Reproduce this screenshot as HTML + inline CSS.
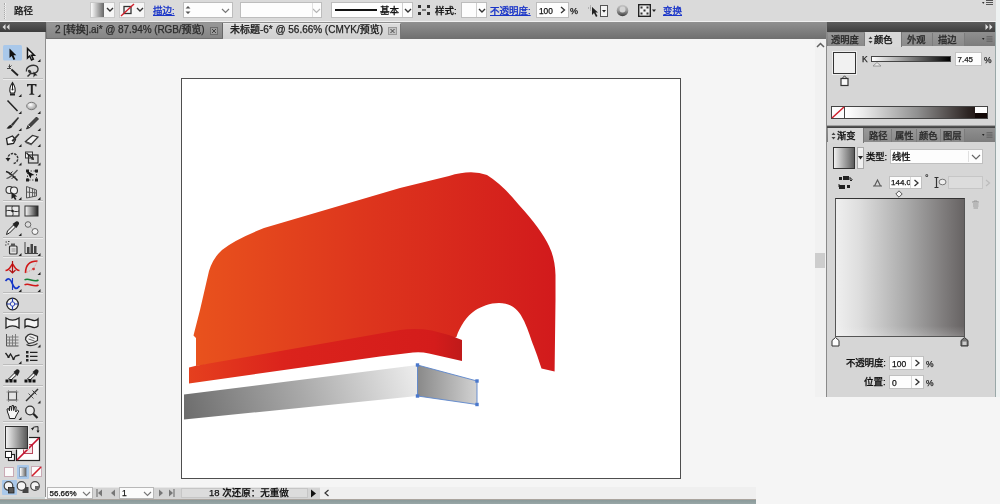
<!DOCTYPE html>
<html lang="zh">
<head>
<meta charset="utf-8">
<title>Illustrator</title>
<style>
*{box-sizing:border-box;margin:0;padding:0}
html,body{width:1000px;height:504px;overflow:hidden;background:#f5f5f5}
body{position:relative;font-family:"Liberation Sans","Noto Sans CJK SC",sans-serif;font-size:10px;color:#111;font-weight:500;filter:blur(.4px)}
.a{position:absolute}
.t{position:absolute;white-space:nowrap;line-height:12px;font-size:9.5px;-webkit-text-stroke:.25px}
.bl{color:#1a35c8;text-decoration:underline}
.wb{position:absolute;background:#fdfdfd;border:1px solid #bdbdbd}
.sep{position:absolute;left:3px;width:40px;height:1px;background:#bcbcbc;border-bottom:1px solid #ececec;height:2px}
svg{position:absolute;overflow:visible}
</style>
</head>
<body>
<!-- ===== canvas ===== -->
<div class="a" id="canvas" style="left:47px;top:39px;width:779px;height:448px;background:#f5f5f5"></div>
<div class="a" id="artboard" style="left:181px;top:77.5px;width:500px;height:401px;background:#fff;border:1.5px solid #4e4e4e"></div>
<svg id="art" style="left:0;top:0" width="1000" height="504" viewBox="0 0 1000 504">
<defs>
<linearGradient id="gBody" x1="190" y1="0" x2="556" y2="0" gradientUnits="userSpaceOnUse"><stop offset="0" stop-color="#e9531d"/><stop offset=".45" stop-color="#de371d"/><stop offset="1" stop-color="#d21a1c"/></linearGradient>
<linearGradient id="gStrip" x1="188" y1="0" x2="462" y2="0" gradientUnits="userSpaceOnUse"><stop offset="0" stop-color="#e5401e"/><stop offset=".35" stop-color="#db231c"/><stop offset=".9" stop-color="#d41c1b"/><stop offset="1" stop-color="#c01a1a"/></linearGradient>
<linearGradient id="gBar" x1="190" y1="425" x2="410" y2="352" gradientUnits="userSpaceOnUse"><stop offset="0" stop-color="#6e6e6e"/><stop offset=".5" stop-color="#a9a9a9"/><stop offset="1" stop-color="#ececec"/></linearGradient>
<linearGradient id="gSel" x1="418" y1="0" x2="477" y2="0" gradientUnits="userSpaceOnUse"><stop offset="0" stop-color="#8a8a8a"/><stop offset="1" stop-color="#d2d2d2"/></linearGradient>
</defs>
<path fill="url(#gBody)" d="M196,366 L196,338 L193.500,335.500 L194.500,331.500 L200,310 L203,297 L209,271 Q213,258 222,250 Q234,240 264,228 L400,188 L449,176 Q471,169 487,175 Q503,185 519,205 Q541,229 549,246 Q555,258 555.5,275 L555.5,300 L554.600,371.600 L541.500,368.400 C537.500,356 534,347 531.700,341 C529,333 526,323.500 520.800,315 C515,306 507,303 499,303 C490,303 481,306.500 475,310.600 C467,316 460,326 456.400,337 L440,345 L400,336 L300,353 Z"/>
<path fill="url(#gStrip)" d="M189,367.500 L196,365.800 L400,330 Q416,327.800 432,330.500 Q448,334 462,340 L462,361 L429,353.5 Q421,351.8 413,352.6 L380,356.5 L189,383.500 Z"/>
<path fill="url(#gBar)" d="M184,394.5 L417.5,365 L417.5,396 L184,419.5 Z"/>
<path fill="url(#gSel)" stroke="#5a84cc" stroke-width=".9" d="M417.5,365 L477,381 L477,404.5 L417.5,396 Z"/>
<g fill="#4a78cc"><rect x="415.800" y="363.300" width="3.400" height="3.400"/><rect x="475.300" y="379.300" width="3.400" height="3.400"/><rect x="475.300" y="402.800" width="3.400" height="3.400"/><rect x="415.800" y="394.300" width="3.400" height="3.400"/></g>
</svg>
<!-- ===== control bar ===== -->
<div class="a" id="ctrl" style="left:0;top:0;width:1000px;height:22px;background:#dadada;border-bottom:1px solid #f0f0f0"></div>
<div id="ctrlitems">
<div class="a" style="left:4px;top:3px;width:2px;height:16px;border-left:1px dotted #aaa;border-right:1px dotted #f4f4f4"></div>
<div class="t" style="left:14px;top:5px;font-size:9.5px;color:#1a1a1a">路径</div>
<div class="wb" style="left:90px;top:2px;width:25px;height:16px;border-color:#c9c9c9;background:#f6f6f6"></div>
<div class="a" style="left:92px;top:3px;width:12px;height:14px;background:linear-gradient(90deg,#f4f4f4,#666)"></div>
<svg style="left:106px;top:7px" width="8" height="6"><path d="M1,1 L4,4 L7,1" fill="none" stroke="#333" stroke-width="1.4"/></svg>
<div class="wb" style="left:119px;top:2px;width:26px;height:16px;border-color:#c9c9c9;background:#f6f6f6"></div>
<svg style="left:120px;top:3px" width="15" height="14"><rect x="4" y="3.5" width="7" height="7" fill="none" stroke="#333" stroke-width="1.3"/><path d="M1,13 L14,1" stroke="#d0202c" stroke-width="1.4"/></svg>
<svg style="left:136px;top:7px" width="8" height="6"><path d="M1,1 L4,4 L7,1" fill="none" stroke="#333" stroke-width="1.4"/></svg>
<div class="t bl" style="left:153px;top:5px">描边:</div>
<div class="wb" style="left:183px;top:2px;width:50px;height:16px"></div>
<svg style="left:185px;top:5px" width="6" height="10"><path d="M0.5,3.5 L3,1 L5.5,3.5 Z M0.5,6.5 L3,9 L5.5,6.5 Z" fill="#555"/></svg>
<svg style="left:221px;top:8px" width="9" height="6"><path d="M1,1 L4.5,4.5 L8,1" fill="none" stroke="#777" stroke-width="1.2"/></svg>
<div class="wb" style="left:240px;top:2px;width:82px;height:16px"></div>
<svg style="left:312px;top:8px" width="9" height="6"><path d="M1,1 L4.5,4.5 L8,1" fill="none" stroke="#b5b5b5" stroke-width="1.2"/></svg>
<div class="a" style="left:312px;top:3px;width:1px;height:14px;background:#e0e0e0"></div>
<div class="wb" style="left:331px;top:2px;width:82px;height:16px"></div>
<div class="a" style="left:335px;top:9px;width:42px;height:2px;background:#111"></div>
<div class="t" style="left:380px;top:5px;font-size:9.5px">基本</div>
<div class="a" style="left:402px;top:3px;width:1px;height:14px;background:#d0d0d0"></div>
<svg style="left:404px;top:8px" width="8" height="6"><path d="M1,1 L4,4 L7,1" fill="none" stroke="#333" stroke-width="1.4"/></svg>
<svg style="left:418px;top:4px" width="12" height="12"><g fill="#333"><rect x="0" y="1" width="3" height="3"/><rect x="9" y="1" width="3" height="3"/><rect x="0" y="8" width="3" height="3"/><rect x="9" y="8" width="3" height="3"/><rect x="4" y="5" width="4" height="2" fill="#777"/></g></svg>
<div class="t" style="left:435px;top:5px">样式:</div>
<div class="wb" style="left:461px;top:2px;width:26px;height:16px"></div>
<div class="a" style="left:476px;top:3px;width:1px;height:14px;background:#d0d0d0"></div>
<svg style="left:478px;top:8px" width="8" height="6"><path d="M1,1 L4,4 L7,1" fill="none" stroke="#333" stroke-width="1.4"/></svg>
<div class="t bl" style="left:490px;top:5px">不透明度:</div>
<div class="wb" style="left:536px;top:2px;width:33px;height:16px"></div>
<div class="t" style="left:539px;top:5px;font-size:8.3px">100</div>
<svg style="left:560px;top:6px" width="6" height="8"><path d="M1,1 L4.5,4 L1,7" fill="none" stroke="#333" stroke-width="1.3"/></svg>
<div class="t" style="left:570px;top:5px;font-size:9px">%</div>
<svg style="left:586px;top:3px" width="24" height="15"><g fill="none" stroke="#888" stroke-width="1"><path d="M2,5 h5 M4.500,2.500 v5" stroke-dasharray="1 1"/></g><path d="M6,4 L6,12 L8,10 L10,14 L11.500,13 L9.500,9.500 L12,9.500 Z" fill="#222"/><rect x="14.500" y="2.500" width="7" height="11" fill="#f4f4f4" stroke="#555"/><path d="M16,7 h4 l-2,2.500 z" fill="#222"/></svg>
<svg style="left:616px;top:4px" width="13" height="13"><defs><linearGradient id="rg" x1="0" y1="0" x2="0" y2="1"><stop offset="0" stop-color="#c8c8c8"/><stop offset=".5" stop-color="#9a9a9a"/><stop offset="1" stop-color="#3a3a3a"/></linearGradient></defs><circle cx="6.500" cy="6.500" r="5.800" fill="url(#rg)"/><circle cx="6.500" cy="5.500" r="3" fill="#d4d4d4"/></svg>
<svg style="left:638px;top:4px" width="20" height="13"><rect x="0.700" y="0.700" width="11.600" height="11.600" fill="#eee" stroke="#222" stroke-width="1.400"/><g fill="#333"><rect x="2.500" y="2.500" width="2" height="2"/><rect x="8.500" y="2.500" width="2" height="2"/><rect x="5.500" y="5.500" width="2" height="2"/><rect x="2.500" y="8.500" width="2" height="2"/><rect x="8.500" y="8.500" width="2" height="2"/></g><path d="M14,5.500 h4 l-2,2.500 z" fill="#222"/></svg>
<div class="t bl" style="left:663px;top:5px">变换</div>
<svg style="left:982px;top:0px" width="12" height="7"><path d="M0,2 h2.500 l-1.250,2z" fill="#333"/><path d="M4,0.500 h7 M4,2.500 h7 M4,4.500 h7" stroke="#555" stroke-width="1"/></svg>
</div>
<!-- ===== tab bar ===== -->
<div class="a" id="tabbar" style="left:46px;top:22px;width:781px;height:17px;background:linear-gradient(#909090,#6f6f6f)"></div>
<div id="tabs">
<div class="a" style="left:47px;top:23px;width:176px;height:15px;background:linear-gradient(#989898,#858585);border-right:1px solid #666"></div>
<div class="t" id="tab1" style="left:55px;top:24px;font-size:10px;color:#2c2c2c;letter-spacing:-0.08px">2 [转换].ai* @ 87.94% (RGB/预览)</div>
<svg style="left:210px;top:27px" width="8" height="8"><rect x=".5" y=".5" width="7" height="7" fill="#9c9c9c" stroke="#6c6c6c"/><path d="M2,2 L6,6 M6,2 L2,6" stroke="#444" stroke-width="1"/></svg>
<div class="a" style="left:223px;top:23px;width:178px;height:16px;background:linear-gradient(#dcdcdc,#d0d0d0);border-right:1px solid #777;border-top:1px solid #e8e8e8"></div>
<div class="t" id="tab2" style="left:230px;top:24px;font-size:10px;color:#222;letter-spacing:-0.02px">未标题-6* @ 56.66% (CMYK/预览)</div>
<svg style="left:388px;top:27px" width="9" height="8"><rect x=".5" y=".5" width="8" height="7" fill="#c4c4c4" stroke="#999"/><path d="M2.500,2 L6.500,6 M6.500,2 L2.500,6" stroke="#444" stroke-width="1"/></svg>
</div>
<!-- ===== toolbar ===== -->
<div class="a" id="tools" style="left:0;top:22px;width:46px;height:475px;background:#d8d8d8;border-right:1.5px solid #8e8e8e"></div>
<div class="a" style="left:0;top:22px;width:46px;height:10px;background:linear-gradient(#5a5a5a,#3c3c3c)"></div>
<!--TOOLS-S--><div id="toolsitems"><svg style="left:2px;top:24px" width="8" height="6"><path d="M3.500,0 L0.500,3 L3.500,6z M7.500,0 L4.500,3 L7.500,6z" fill="#d8d8d8"/></svg><div class="sep" style="top:78px"></div><div class="sep" style="top:200px"></div><div class="sep" style="top:237px"></div><div class="sep" style="top:256px"></div><div class="sep" style="top:292px"></div><div class="sep" style="top:312px"></div><div class="sep" style="top:364px"></div><div class="sep" style="top:385px"></div><div class="sep" style="top:421px"></div><svg id="toolicons" style="left:0;top:0" width="47" height="504" viewBox="0 0 47 504"><defs><radialGradient id="tgE" cx=".4" cy=".35" r=".7"><stop offset="0" stop-color="#fff"/><stop offset="1" stop-color="#999"/></radialGradient><linearGradient id="tgG"><stop offset="0" stop-color="#fff"/><stop offset="1" stop-color="#222"/></linearGradient></defs><rect x="3" y="45" width="19" height="15.500" rx="1.500" fill="#a9c8ea"/><g transform="translate(12.5,54)"><path d="M-3,-5.500 L-3,4 L-0.800,2 L1,6 L2.800,5.200 L1,1.300 L3.800,1.300 Z" fill="#111"/></g><g transform="translate(31.5,54)"><path d="M-4,-5.500 L-4,4 L-1.800,2 L0,6 L1.800,5.200 L0,1.300 L2.800,1.300 Z" fill="#f4f4f4" stroke="#111" stroke-width="1.500"/></g><path d="M40.5,59 l0,3 l-3,0z" fill="#222"/><g transform="translate(12.5,70.5)"><path d="M-1,-1 L5.500,5" stroke="#222" stroke-width="1.800"/><path d="M-4,-4 L-1,-1 M-5.500,-2 h3 M-3,-6 v3 M-1,-5 l-1.500,1.500" stroke="#444" stroke-width="1"/></g><g transform="translate(31.5,70.5)"><path d="M-5,1 C-7,-5 6,-8 6.500,-2 C7,3 0,4 -2,2 C-4,0 -2,-1 -1,1 C0,3 -3,5 -4,6" fill="none" stroke="#333" stroke-width="1.400"/><path d="M2,1 L6,5 L3.500,5 L2,7z" fill="#222"/></g><g transform="translate(12.5,89)"><path d="M0,-6.500 C3,-2 3.500,1 2,4 L-2,4 C-3.500,1 -3,-2 0,-6.500Z" fill="#fff" stroke="#222" stroke-width="1.200"/><path d="M0,-6 V0" stroke="#222" stroke-width="1"/><circle cx="0" cy="0.500" r="1" fill="#222"/><rect x="-2.500" y="4.500" width="5" height="2" fill="#222"/></g><path d="M21.5,94 l0,3 l-3,0z" fill="#222"/><g transform="translate(31.5,89.5)"><path d="M-4.500,-5.500 h9.500 v2.500 h-1 l-0.500,-1.300 h-2.200 v8.300 l1.500,0.500 v0.800 h-5 v-0.800 l1.500,-0.500 v-8.300 h-2.200 l-0.500,1.300 h-1z" fill="#222"/></g><path d="M40.5,94 l0,3 l-3,0z" fill="#222"/><g transform="translate(12.5,106)"><path d="M-5,-5.500 L5,5" stroke="#222" stroke-width="1.500"/></g><path d="M21.5,111 l0,3 l-3,0z" fill="#222"/><g transform="translate(31.5,106)"><ellipse cx="0" cy="0" rx="4.800" ry="3.700" fill="url(#tgE)" stroke="#777" stroke-width="1"/></g><path d="M40.5,111 l0,3 l-3,0z" fill="#222"/><g transform="translate(12.5,123)"><path d="M5.500,-6 L-1.500,1.500 L0.300,3 L6.500,-5z" fill="#333"/><path d="M-1.800,1.800 C-3,2 -4.500,4 -6,5.500 C-3,6 -0.500,5 0,3.300z" fill="#222"/></g><path d="M21.5,128 l0,3 l-3,0z" fill="#222"/><g transform="translate(31.5,123)"><path d="M5,-6 L-3.500,2.500 L-5,6 L-1.500,4.500 L7,-4z" fill="#444" stroke="#222" stroke-width=".8"/><path d="M-3,2.500 l1.500,1.500" stroke="#eee" stroke-width="1"/></g><path d="M40.5,128 l0,3 l-3,0z" fill="#222"/><g transform="translate(12.5,139.5)"><path d="M-6,-1 L0,-3.500 L3,0 L1,4 L-5,5z" fill="#f4f4f4" stroke="#222" stroke-width="1.300"/><path d="M6,-6 L-1,1 L0.500,2.500 L7,-5z" fill="#333"/></g><path d="M21.5,144 l0,3 l-3,0z" fill="#222"/><g transform="translate(31.5,139.5)"><path d="M-6,2 L1,-4 L6.500,-2.500 L0,4.500z" fill="#f2f2f2" stroke="#333" stroke-width="1.200"/><path d="M-6,2 L0,4.500 L0,6 L-6,3.500z" fill="#555"/></g><path d="M40.5,144 l0,3 l-3,0z" fill="#222"/><g transform="translate(12.5,158)"><path d="M-4.500,2 A5,5 0 1 1 1,5.500" fill="none" stroke="#333" stroke-width="1.400" stroke-dasharray="2.500 1"/><path d="M-7,0 h5 l-2.500,3.500z" fill="#222"/></g><path d="M21.5,162.5 l0,3 l-3,0z" fill="#222"/><g transform="translate(31.5,157.5)"><rect x="-6" y="-5.500" width="7" height="6" fill="#eee" stroke="#333" stroke-width="1"/><rect x="-3" y="-2.500" width="9.500" height="8" fill="none" stroke="#333" stroke-width="1.200"/><path d="M-5,-4.500 L1,1" stroke="#222" stroke-width="1.200"/><path d="M2.500,2.500 l-3,-0.500 l2.500,-2.500z" fill="#222"/></g><path d="M40.5,162.5 l0,3 l-3,0z" fill="#222"/><g transform="translate(12.5,175.5)"><path d="M-6.500,-4 C-2,-3 0,0 5,5" fill="none" stroke="#222" stroke-width="1.600"/><path d="M-6,3 C-2,2 1,-1 5,-5.500" fill="none" stroke="#555" stroke-width="1.200"/><path d="M-3,-1 l3,-3 M-1,3 l4,-2" stroke="#333" stroke-width="1"/></g><g transform="translate(31.5,175.5)"><rect x="-4" y="-4.500" width="9" height="9" fill="none" stroke="#444" stroke-width="1" stroke-dasharray="1.500 1.500"/><g fill="#222"><rect x="-5.500" y="-6" width="3" height="3"/><rect x="3.500" y="-6" width="3" height="3"/><rect x="-5.500" y="3" width="3" height="3"/><rect x="3.500" y="3" width="3" height="3"/></g><path d="M-5,-5 L-1,3 L0,0 L3,-0.500z" fill="#111"/></g><g transform="translate(12.5,192)"><circle cx="-3" cy="-2" r="3.500" fill="#eee" stroke="#333" stroke-width="1.100"/><circle cx="1.500" cy="-1.500" r="3.500" fill="#eee" stroke="#333" stroke-width="1.100"/><path d="M-1,0 L-1,7 L1,5.500 L2.500,8 L4,7.300 L2.500,4.800 L4.800,4.500z" fill="#222"/></g><path d="M21.5,197 l0,3 l-3,0z" fill="#222"/><g transform="translate(31.5,192)"><path d="M-5,-5.500 L-5,6 L5,4 L5,-2z" fill="#ddd" stroke="#555" stroke-width="1"/><path d="M-2,-4.500 V5.500 M1,-3.500 V5 M3.200,-2.700 V4.500 M-5,0 L5,1" stroke="#555" stroke-width=".9"/></g><path d="M40.5,197 l0,3 l-3,0z" fill="#222"/><g transform="translate(12.5,211)"><rect x="-6.500" y="-5" width="13" height="10" fill="#e8e8e8" stroke="#333" stroke-width="1.200"/><path d="M-6.500,0 C-3,-2 3,2 6.500,0 M0,-5 C-2,-2 2,2 0,5" fill="none" stroke="#333" stroke-width="1"/><circle cx="0" cy="0" r="1.200" fill="#222"/></g><g transform="translate(31.5,211)"><rect x="-6.500" y="-5" width="13" height="10" fill="url(#tgG)" stroke="#333" stroke-width="1"/></g><g transform="translate(12.5,228)"><path d="M-6,6.500 L-5,3 L1,-3 L3,-1 L-3,5z" fill="#eee" stroke="#222" stroke-width="1"/><path d="M0,-4 L4,0 L6.500,-4 C7,-6 5,-7.500 3.500,-6.500z" fill="#222"/></g><path d="M21.5,233 l0,3 l-3,0z" fill="#222"/><g transform="translate(31.5,228)"><circle cx="-3.500" cy="-3.500" r="2.800" fill="#ddd" stroke="#666" stroke-width="1"/><circle cx="3.500" cy="3.500" r="3" fill="#f4f4f4" stroke="#666" stroke-width="1"/><path d="M-2,-2 L2,2" stroke="#888" stroke-width="1" stroke-dasharray="1 1"/></g><g transform="translate(12.5,248)"><rect x="-3" y="-2" width="7.500" height="8" rx="1" fill="#e4e4e4" stroke="#333" stroke-width="1.200"/><rect x="-1.500" y="-4.500" width="4" height="2.500" fill="#555"/><path d="M-7,-6 h1.500 M-5,-4 h1.500 M-7.500,-3 h1.500 M-4.500,-6.500 h1.500" stroke="#444" stroke-width="1"/><path d="M-1,1 h4 M-1,3 h4" stroke="#777" stroke-width=".8"/></g><path d="M21.5,253 l0,3 l-3,0z" fill="#222"/><g transform="translate(31.5,248)"><path d="M-6.500,-6 V5.500 H6.500" fill="none" stroke="#444" stroke-width="1"/><rect x="-4.500" y="-1" width="2.500" height="6" fill="#444"/><rect x="-1" y="-4" width="2.500" height="9" fill="#444"/><rect x="2.500" y="-2" width="2.500" height="7" fill="#444"/></g><path d="M40.5,253 l0,3 l-3,0z" fill="#222"/><g transform="translate(12.5,267)"><path d="M-7,3.500 C-3,3.500 -2,-1 0,-3 C2,-1 3,3.500 7,3.500" fill="none" stroke="#d01818" stroke-width="1.600"/><path d="M0,-6 V6 M-3,3 l3,3 l3,-3" stroke="#b01010" stroke-width="1.200" fill="none"/></g><g transform="translate(31.5,267)"><path d="M-6,6 C-6,-2 -2,-6 6,-6" fill="none" stroke="#d01818" stroke-width="1.600"/><circle cx="2" cy="2" r="1.300" fill="#d01818"/><path d="M-6,6 L2,2 L6,-6" fill="none" stroke="#e08080" stroke-width=".8" stroke-dasharray="1 1"/></g><path d="M40.5,272 l0,3 l-3,0z" fill="#222"/><g transform="translate(12.5,284)"><path d="M-7,-3 C-4,-7 -2,-5 0,0 C2,5 4,6 7,2" fill="none" stroke="#1838c8" stroke-width="1.700"/><path d="M0,-6 V6" stroke="#1838c8" stroke-width="1.100"/></g><path d="M21.5,289 l0,3 l-3,0z" fill="#222"/><g transform="translate(31.5,284)"><path d="M-7,-4 C-3,-7 2,-1 7,-4" fill="none" stroke="#188038" stroke-width="1.500"/><path d="M-7,1 C-3,-2 2,4 7,1" fill="none" stroke="#d01818" stroke-width="1.500"/></g><path d="M40.5,289 l0,3 l-3,0z" fill="#222"/><g transform="translate(12.5,304)"><circle cx="0" cy="0" r="5.800" fill="#f0f0f0" stroke="#222" stroke-width="1.300"/><path d="M-5.800,0 H5.800 M0,-5.800 V5.800" stroke="#2038b0" stroke-width="1.100"/><circle cx="0" cy="0" r="2.200" fill="#f0f0f0" stroke="#2038b0" stroke-width=".9"/></g><g transform="translate(12.5,323)"><path d="M-6.500,-5 C-2,-2 2,-2 6.500,-5 V5 C2,2 -2,2 -6.500,5z" fill="#f4f4f4" stroke="#222" stroke-width="1.300"/></g><g transform="translate(31.5,323)"><path d="M-6.500,-3 C-3,-7 2,1 6.500,-4 V3 C2,8 -3,0 -6.500,4z" fill="#f4f4f4" stroke="#222" stroke-width="1.300"/></g><g transform="translate(12.5,340)"><path d="M-6,-6 V6 H6" fill="none" stroke="#555" stroke-width="1"/><path d="M-3,-3 V6 M0,-5 V6 M3,-6 V6 M-6,3 H6 M-6,0 H6 M-6,-3 H6" stroke="#777" stroke-width=".9"/></g><g transform="translate(31.5,339.5)"><path d="M-6,0 C-6,-4 -2,-6 1,-5 L6,-3 L6,1 L2,3 L-3,4z" fill="#eee" stroke="#333" stroke-width="1.200"/><path d="M-5,5 C-2,7 3,6 6,4" fill="none" stroke="#333" stroke-width="1.200"/><path d="M-2,-3 L3,-1 M-3,-0.500 L3,1.500" stroke="#555" stroke-width=".9"/></g><path d="M40.5,344.5 l0,3 l-3,0z" fill="#222"/><g transform="translate(12.5,356)"><path d="M-7,-3 L-4,1 L-2,-2 L1,3 L3,0 L7,-1" fill="none" stroke="#222" stroke-width="1.300"/><g fill="#222"><rect x="-5" y="0" width="2" height="2"/><rect x="0" y="2" width="2" height="2"/></g></g><path d="M21.5,361 l0,3 l-3,0z" fill="#222"/><g transform="translate(31.5,356)"><g fill="#222"><rect x="-5.500" y="-5" width="2.500" height="2.500"/><rect x="-5.500" y="-1" width="2.500" height="2.500"/><rect x="-5.500" y="3" width="2.500" height="2.500"/></g><path d="M-1.500,-3.700 H6 M-1.500,0.300 H6 M-1.500,4.300 H6" stroke="#222" stroke-width="1.300"/></g><g transform="translate(12.5,376)"><path d="M-4,3 L2,-3 L4,-1 L-2,4.500z" fill="#eee" stroke="#222" stroke-width="1"/><path d="M1,-4 L5,0 L7,-4 C7.500,-6 5.500,-7 4,-6.500z" fill="#222"/><path d="M-7,6.500 h3 v-3 h-3z M-3,6.500 h3 v-3.500 h-3z M1,6.500 h3 v-3 h-3z" fill="#111"/></g><g transform="translate(31.5,376)"><path d="M-4,3 L2,-3 L4,-1 L-2,4.500z" fill="#eee" stroke="#222" stroke-width="1"/><path d="M1,-4 L5,0 L7,-4 C7.500,-6 5.500,-7 4,-6.500z" fill="#222"/><path d="M-7,6.500 h3 v-3 h-3z M-3,6.500 h3 v-3.500 h-3z M1,6.500 h3 v-3 h-3z" fill="#111"/></g><g transform="translate(12.5,396)"><rect x="-4" y="-4" width="8" height="8" fill="#e4e4e4" stroke="#444" stroke-width="1.100"/><path d="M-6,-4 h2 M4,-4 h2 M-6,4 h2 M4,4 h2 M-4,-6 v2 M4,-6 v2 M-4,4 v2 M4,4 v2" stroke="#888" stroke-width=".8"/></g><g transform="translate(31.5,395.5)"><path d="M6.500,-6.500 L-2,2 L-5.500,5.500" stroke="#333" stroke-width="1.500" fill="none"/><path d="M1,-5 L5,-1" stroke="#333" stroke-width="1"/><path d="M-3,-2 L2,3" stroke="#555" stroke-width="1"/></g><path d="M40.5,400.5 l0,3 l-3,0z" fill="#222"/><g transform="translate(12.5,412)"><path d="M-5,0 L-5.500,-3 L-4,-3.500 L-3,-1 L-3,-5.500 L-1.500,-5.500 L-1,-1.500 L-0.500,-6.500 L1,-6.500 L1.200,-1.500 L2.200,-5.500 L3.700,-5.200 L3.200,0 L5,-2 L6.300,-1 L3.500,4 L2.500,6.500 L-3,6.500 L-3.500,4z" fill="#f6f6f6" stroke="#222" stroke-width="1"/></g><path d="M21.5,417 l0,3 l-3,0z" fill="#222"/><g transform="translate(31.5,412)"><circle cx="-1.500" cy="-1.500" r="4.300" fill="#e8e8e8" stroke="#333" stroke-width="1.300"/><path d="M1.800,1.800 L6,6" stroke="#222" stroke-width="2.200"/></g></svg><div class="a" style="left:5px;top:425.500px;width:23px;height:23px;background:linear-gradient(90deg,#f2f2f2,#5a5a5a);border:1px solid #333;box-shadow:0 0 0 1px #e8e8e8"></div>
<svg style="left:16px;top:437px" width="24" height="24"><rect x=".5" y=".5" width="23" height="23" fill="#fdfdfd" stroke="#222" stroke-width="1.200"/><rect x="7.500" y="7.500" width="9" height="9" fill="#f6e4e6" stroke="#b8485c" stroke-width="1"/><path d="M1,23 L23,1" stroke="#c4122e" stroke-width="1.700"/></svg>
<div class="a" style="left:5px;top:425.500px;width:23px;height:23px;background:linear-gradient(90deg,#f2f2f2,#5a5a5a);border:1px solid #333;box-shadow:0 0 0 1px #e8e8e8;clip-path:inset(-1px -1px -1px -1px)"></div>
<svg style="left:31px;top:425px" width="9" height="9"><path d="M1.500,4 C1.500,1.500 5,1.500 7,1.500 M7,1.500 V7" fill="none" stroke="#333" stroke-width="1.100" transform="rotate(0)"/><path d="M0,3 h3 l-1.500,2.500z M5.500,5.500 h3 l-1.500,2.500z" fill="#222"/></svg>
<svg style="left:5px;top:451px" width="10" height="10"><rect x="3.500" y="3.500" width="6" height="6" fill="#fff" stroke="#222" stroke-width="1.200"/><rect x="0.500" y="0.500" width="6" height="6" fill="#fff" stroke="#222"/></svg>
<div class="a" style="left:16.500px;top:464.500px;width:12.500px;height:14px;background:#a9c8ea;border-radius:1px"></div>
<div class="a" style="left:3.500px;top:466.500px;width:10px;height:10px;background:#fafafa;border:1px solid #c9a9b4"></div>
<div class="a" style="left:18.500px;top:466.500px;width:8.500px;height:10px;background:linear-gradient(90deg,#fff,#666);border:1px solid #8aa0b8"></div>
<svg style="left:31px;top:466px" width="11" height="11"><rect x=".5" y=".5" width="10" height="10" fill="#fafafa" stroke="#c9a9b4"/><path d="M1,10 L10,1" stroke="#d0202c" stroke-width="1.600"/></svg>
<div class="a" style="left:2px;top:479.500px;width:14.500px;height:15.500px;background:#a9c8ea;border-radius:1px"></div>
<svg style="left:3px;top:480px" width="42" height="15"><g><circle cx="5.500" cy="6" r="4.300" fill="#f4f4f4" stroke="#444" stroke-width="1.200"/><rect x="5.500" y="7.500" width="5.500" height="5.500" fill="#555" stroke="#222" stroke-width=".8"/></g><g><rect x="19.500" y="7" width="6" height="6" fill="#444"/><circle cx="18.500" cy="6" r="4.300" fill="#f4f4f4" stroke="#444" stroke-width="1.200"/></g><g><circle cx="32" cy="6" r="4.300" fill="#f4f4f4" stroke="#444" stroke-width="1.200"/><path d="M32,6 h4 v3.500 h-4z" fill="#666"/></g></svg></div><!--TOOLS-E-->
<!-- ===== right panels ===== -->
<!--PANELS-S--><div id="panels"><div class="a" style="left:815px;top:39px;width:11px;height:448px;background:#f1f1f1"></div><svg style="left:816px;top:42px" width="9" height="6"><path d="M1,5 L4.500,1.500 L8,5" fill="none" stroke="#606060" stroke-width="1.500"/></svg><div class="a" style="left:815px;top:253px;width:10px;height:15px;background:#cdcdcd"></div><div class="a" style="left:756px;top:397px;width:244px;height:107px;background:#f5f5f5"></div><div class="a" style="left:826px;top:22px;width:170px;height:375px;background:#d6d6d6;border-left:1px solid #8a8a8a;border-right:1px solid #9aa8a8"></div><div class="a" style="left:996px;top:0;width:4px;height:397px;background:#eef2f2"></div><div class="a" style="left:827px;top:22px;width:168px;height:10px;background:linear-gradient(#5c5c5c,#3e3e3e)"></div><svg style="left:985px;top:24px" width="8" height="6"><path d="M0.500,0 L3.500,3 L0.500,6z M4.500,0 L7.500,3 L4.500,6z" fill="#e0e0e0"/></svg><div class="a" style="left:827px;top:32px;width:168px;height:14px;background:linear-gradient(#8f8f8f,#7c7c7c)"></div><div class="a" style="left:828px;top:33px;width:37px;height:13px;background:linear-gradient(#989898,#8a8a8a);border-right:1px solid #7c7c7c"></div><div class="t" style="left:831px;top:33.5px;font-size:9.3px;color:#2a2a2a">透明度</div><div class="a" style="left:865px;top:32px;width:37px;height:15px;background:#d8d8d8;border-right:1px solid #777"></div><svg style="left:868px;top:36px" width="5" height="8"><path d="M0.500,3 L2.500,0.500 L4.500,3z M0.500,5 L2.500,7.500 L4.500,5z" fill="#444"/></svg><div class="t" style="left:874px;top:33.5px;font-size:9.3px;color:#111">颜色</div><div class="a" style="left:902px;top:33px;width:31px;height:13px;background:linear-gradient(#989898,#8a8a8a);border-right:1px solid #7c7c7c"></div><div class="t" style="left:907px;top:33.5px;font-size:9.3px;color:#2a2a2a">外观</div><div class="a" style="left:933px;top:33px;width:32px;height:13px;background:linear-gradient(#989898,#8a8a8a);border-right:1px solid #7c7c7c"></div><div class="t" style="left:938px;top:33.5px;font-size:9.3px;color:#2a2a2a">描边</div><svg style="left:982px;top:36px" width="11" height="7"><path d="M0,2 h2.500 l-1.250,2z" fill="#222"/><path d="M4.500,0.800 h6 M4.500,3 h6 M4.500,5.200 h6" stroke="#5a5a5a" stroke-width=".9"/></svg><div class="a" style="left:833px;top:52px;width:23px;height:22px;background:#f1f1f1;border:1.5px solid #333;box-shadow:0 0 0 1px #eee"></div><svg style="left:840px;top:75px" width="9" height="12"><path d="M2.500,3 L4.500,0.800 L6.500,3" fill="none" stroke="#444" stroke-width="1"/><rect x="1" y="3.500" width="7" height="7" fill="#f8f8f8" stroke="#333" stroke-width="1.200"/></svg><div class="t" style="left:862px;top:53px;font-size:8.500px;font-weight:400;color:#222">K</div><div class="a" style="left:871px;top:56px;width:80px;height:6px;background:linear-gradient(90deg,#fff,#000);border:1px solid #444"></div><svg style="left:872px;top:62px" width="10" height="5"><path d="M1,4 L5,0.500 L9,4z" fill="#eee" stroke="#888" stroke-width=".8"/></svg><div class="wb" style="left:955px;top:52px;width:27px;height:14px;border-color:#c4c4c4"></div><div class="t" style="left:957.500px;top:53.500px;font-size:8px;color:#222">7.45</div><div class="t" style="left:984px;top:53.500px;font-size:8.500px;color:#222">%</div><div class="a" style="left:831px;top:106px;width:157px;height:13px;background:linear-gradient(90deg,#fff 0,#fff 9%,#ebebeb 20%,#909090 55%,#2c2422 88%,#1a0c08 100%);border:1px solid #444;border-top-width:1.500px"></div><svg style="left:831px;top:106px" width="14" height="13"><rect x=".5" y=".5" width="13" height="12" fill="#fdfdfd" stroke="#444"/><path d="M1,12 L13,1" stroke="#d0202c" stroke-width="1.500"/></svg><div class="a" style="left:975px;top:107px;width:12px;height:6px;background:#fdfdfd"></div><div class="a" style="left:975px;top:113px;width:12px;height:5px;background:#120806"></div><div class="a" style="left:827px;top:124.500px;width:168px;height:3.500px;background:linear-gradient(#cfcfcf,#555 45%,#3c3c3c)"></div><div class="a" style="left:827px;top:128px;width:168px;height:14px;background:linear-gradient(#8f8f8f,#7c7c7c)"></div><div class="a" style="left:828px;top:128px;width:36px;height:15px;background:#d8d8d8;border-right:1px solid #777"></div><svg style="left:831px;top:132px" width="5" height="8"><path d="M0.500,3 L2.500,0.500 L4.500,3z M0.500,5 L2.500,7.500 L4.500,5z" fill="#444"/></svg><div class="t" style="left:837px;top:129.5px;font-size:9.3px;color:#111">渐变</div><div class="a" style="left:864px;top:129px;width:28px;height:13px;background:linear-gradient(#989898,#8a8a8a);border-right:1px solid #7c7c7c"></div><div class="t" style="left:869px;top:129.5px;font-size:9.3px;color:#2a2a2a">路径</div><div class="a" style="left:892px;top:129px;width:25px;height:13px;background:linear-gradient(#989898,#8a8a8a);border-right:1px solid #7c7c7c"></div><div class="t" style="left:895px;top:129.5px;font-size:9.3px;color:#2a2a2a">属性</div><div class="a" style="left:917px;top:129px;width:24px;height:13px;background:linear-gradient(#989898,#8a8a8a);border-right:1px solid #7c7c7c"></div><div class="t" style="left:919px;top:129.5px;font-size:9.3px;color:#2a2a2a">颜色</div><div class="a" style="left:941px;top:129px;width:24px;height:13px;background:linear-gradient(#989898,#8a8a8a);border-right:1px solid #7c7c7c"></div><div class="t" style="left:943px;top:129.5px;font-size:9.3px;color:#2a2a2a">图层</div><svg style="left:982px;top:132px" width="11" height="7"><path d="M0,2 h2.500 l-1.250,2z" fill="#222"/><path d="M4.500,0.800 h6 M4.500,3 h6 M4.500,5.200 h6" stroke="#5a5a5a" stroke-width=".9"/></svg><div class="a" style="left:833px;top:147px;width:22px;height:22px;background:linear-gradient(90deg,#f0f0f0,#5c5c5c);border:1px solid #333"></div><div class="a" style="left:857px;top:147px;width:7px;height:22px;background:#f0f0f0;border:1px solid #aaa"></div><svg style="left:858px;top:156px" width="5" height="4"><path d="M0,0 h5 l-2.500,3.500z" fill="#222"/></svg><div class="t" style="left:866px;top:151px;font-size:9.3px;color:#111">类型:</div><div class="wb" style="left:889.500px;top:149px;width:93px;height:14.500px;border-color:#c0c0c0"></div><div class="t" style="left:892px;top:151px;font-size:9.3px;color:#111">线性</div><div class="a" style="left:968px;top:150.500px;width:1px;height:11.500px;background:#e0e0e0"></div><svg style="left:971px;top:154px" width="10" height="6"><path d="M1,1 L5,5 L9,1" fill="none" stroke="#666" stroke-width="1.200"/></svg><svg style="left:838px;top:176px" width="14" height="13"><g fill="#222"><rect x="1" y="1" width="3" height="3"/><rect x="5" y="0" width="6" height="4"/><rect x="1" y="9" width="6" height="4"/><rect x="9" y="9" width="3" height="3"/></g><path d="M11,2 h2 v3 M13,5 l-1.500,-1.500 M13,5 l1.500,-1.500 M3,11 h-2 v-3" fill="none" stroke="#222" stroke-width="1"/></svg><svg style="left:872px;top:179px" width="11" height="8"><path d="M1,7 H10 M2.500,7 L5.500,1 L8.500,7" fill="none" stroke="#555" stroke-width="1.100"/></svg><div class="wb" style="left:889px;top:175.500px;width:33px;height:13px;border-color:#c0c0c0"></div><div class="a" style="left:910px;top:176.500px;width:1px;height:11px;background:#d8d8d8"></div><div class="t" style="left:891px;top:176.500px;font-size:8px;color:#111;width:19px;overflow:hidden">144.0</div><svg style="left:913px;top:178.500px" width="7" height="8"><path d="M1.500,1 L5,4 L1.500,7" fill="none" stroke="#333" stroke-width="1.300"/></svg><div class="t" style="left:925px;top:172px;font-size:9px;color:#333">°</div><svg style="left:934px;top:176px" width="13" height="13"><path d="M2.500,1 V12 M0.500,1.500 h4 M0.500,11.500 h4" stroke="#333" stroke-width="1.200"/><ellipse cx="8.500" cy="6" rx="3.500" ry="2.800" fill="#eee" stroke="#777"/></svg><div class="a" style="left:948px;top:176px;width:35px;height:13px;background:#dcdcdc;border:1px solid #c6c6c6"></div><svg style="left:985px;top:179px" width="6" height="8"><path d="M1,1 L4.500,4 L1,7" fill="none" stroke="#bcbcbc" stroke-width="1.200"/></svg><svg style="left:895px;top:190px" width="8" height="8"><path d="M4,0.800 L7.200,4 L4,7.200 L0.800,4z" fill="#f4f4f4" stroke="#555" stroke-width="1"/></svg><div class="a" style="left:835px;top:197.500px;width:129.800px;height:139px;background:linear-gradient(90deg,#efefef 0,#dedede 18%,#aaaaaa 55%,#676363 100%);border:1px solid #555;border-top:1.500px solid #333"></div><div class="a" style="left:836px;top:326px;width:127.800px;height:9.500px;background:linear-gradient(rgba(255,255,255,0),rgba(255,255,255,.18))"></div><svg style="left:971px;top:200px" width="9" height="11"><path d="M1,2 h7 M3,2 v-1 h3 v1 M2,4 h5.500 M2,6 h5.500 M2.500,8 h4.500" stroke="#9a9a9a" stroke-width="1" fill="none"/></svg><svg style="left:831px;top:337px" width="9" height="10"><path d="M1,3.500 L4.500,0.500 L8,3.500 V9 H1z" fill="#fdfdfd" stroke="#333" stroke-width="1"/></svg><svg style="left:959.500px;top:337px" width="9" height="10"><path d="M1,3.500 L4.500,0.500 L8,3.500 V9 H1z" fill="#777" stroke="#333" stroke-width="1"/><rect x="2.500" y="4.500" width="4" height="3.500" fill="#ccc"/></svg><div class="t" style="left:846px;top:357px;font-size:9.5px;color:#111;letter-spacing:-.2px">不透明度:</div><div class="wb" style="left:889px;top:356px;width:35px;height:14px;border-color:#c0c0c0"></div><div class="a" style="left:911px;top:357px;width:1px;height:12px;background:#d8d8d8"></div><div class="t" style="left:892px;top:357.500px;font-size:8.500px;color:#111">100</div><svg style="left:914px;top:359px" width="7" height="8"><path d="M1.500,1 L5,4 L1.500,7" fill="none" stroke="#333" stroke-width="1.300"/></svg><div class="t" style="left:926px;top:357.500px;font-size:8.500px;color:#222">%</div><div class="t" style="left:864px;top:376px;font-size:9.5px;color:#111">位置:</div><div class="wb" style="left:889px;top:375px;width:35px;height:14px;border-color:#c0c0c0"></div><div class="a" style="left:911px;top:376px;width:1px;height:12px;background:#d8d8d8"></div><div class="t" style="left:892px;top:376.500px;font-size:8.500px;color:#111">0</div><svg style="left:914px;top:378px" width="7" height="8"><path d="M1.500,1 L5,4 L1.500,7" fill="none" stroke="#333" stroke-width="1.300"/></svg><div class="t" style="left:926px;top:376.500px;font-size:8.500px;color:#222">%</div></div><!--PANELS-E-->
<!-- ===== status bar ===== -->
<!--STATUS-S--><div id="status"><div class="a" style="left:47px;top:487px;width:273px;height:12px;background:#d4d4d4;border-top:1px solid #e6e6e6"></div><div class="a" style="left:320px;top:487px;width:436px;height:12px;background:#efefef"></div><div class="a" style="left:0;top:496.500px;width:45px;height:2.500px;background:#cdd4d4"></div><div class="a" style="left:0;top:498.500px;width:756px;height:6px;background:linear-gradient(#aaa49e 0,#aaa49e 1px,#8a9a9a 1px,#9caaaa 100%)"></div><div class="wb" style="left:47px;top:487px;width:46px;height:12px;border-color:#b8b8b8;background:#fbfbfb"></div><div class="t" style="left:49.500px;top:488px;font-size:8px;color:#111;line-height:11px">56.66%</div><svg style="left:82px;top:491px" width="9" height="6"><path d="M1,1 L4.500,4.500 L8,1" fill="none" stroke="#777" stroke-width="1.100"/></svg><svg style="left:96px;top:489px" width="7" height="8"><path d="M1,0 V8" stroke="#777" stroke-width="1.200"/><path d="M6,0.500 L2,4 L6,7.500z" fill="#777"/></svg><svg style="left:110px;top:489px" width="6" height="8"><path d="M5,0.500 L1,4 L5,7.500z" fill="#777"/></svg><div class="wb" style="left:119px;top:487px;width:35px;height:12px;border-color:#b8b8b8;background:#fbfbfb"></div><div class="t" style="left:122px;top:487.500px;font-size:8.500px;color:#111;line-height:11px">1</div><svg style="left:143px;top:491px" width="9" height="6"><path d="M1,1 L4.500,4.500 L8,1" fill="none" stroke="#777" stroke-width="1.100"/></svg><svg style="left:158px;top:489px" width="6" height="8"><path d="M1,0.500 L5,4 L1,7.500z" fill="#777"/></svg><svg style="left:168px;top:489px" width="7" height="8"><path d="M6,0 V8" stroke="#777" stroke-width="1.200"/><path d="M1,0.500 L5,4 L1,7.500z" fill="#777"/></svg><div class="a" style="left:181px;top:488px;width:127px;height:10px;background:#dcdcdc;border:1px solid #c6c6c6"></div><div class="t" style="left:209px;top:487px;font-size:9.500px;color:#111;line-height:12px">18 次还原：无重做</div><svg style="left:310px;top:489px" width="7" height="9"><path d="M1,0.500 L6,4.500 L1,8.500z" fill="#111"/></svg><svg style="left:324px;top:489px" width="6" height="8"><path d="M4.500,1 L1,4 L4.500,7" fill="none" stroke="#333" stroke-width="1.200"/></svg></div><!--STATUS-E-->
</body>
</html>
